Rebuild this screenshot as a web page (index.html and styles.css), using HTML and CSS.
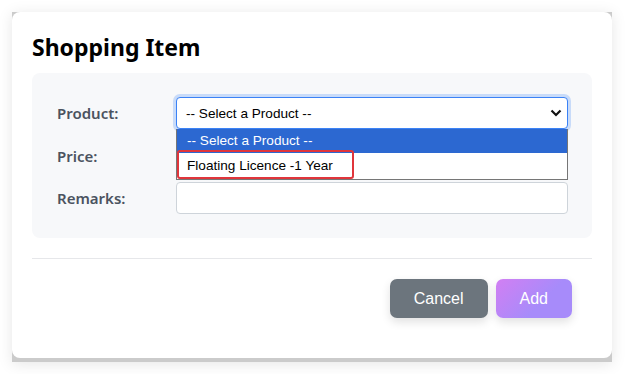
FILE: index.html
```html
<!DOCTYPE html>
<html lang="en">
<head>
  <meta charset="UTF-8" />
  <meta name="viewport" content="width=device-width, initial-scale=1.0" />
  <title>Shopping Item</title>
  <link rel="stylesheet" href="styles.css">
</head>
<body>

  <div class="modal-wrap">
    <div class="modal">
      <h2 class="modal-title">Shopping Item</h2>

      <div class="form-panel">
        <div class="form-row">
          <label>Product:</label>
          <div class="field">
            <div class="select-box">
              <span>-- Select a Product --</span>
              <svg width="12" height="8" viewBox="0 0 12 8"><path d="M1.5 1.5 L6 6 L10.5 1.5" fill="none" stroke="#111" stroke-width="2.2"/></svg>
            </div>
            <!-- open dropdown list -->
            <div class="dropdown">
              <div class="option selected">-- Select a Product --</div>
              <div class="option">Floating Licence -1 Year<span class="highlight"></span></div>
            </div>
          </div>
        </div>
        <div class="form-row">
          <label>Price:</label>
          <div class="field"><div class="text-input"></div></div>
        </div>
        <div class="form-row">
          <label>Remarks:</label>
          <div class="field"><div class="text-input"></div></div>
        </div>
      </div>

      <div class="divider"></div>

      <div class="modal-footer">
        <button class="btn btn-cancel">Cancel</button>
        <button class="btn btn-add">Add</button>
      </div>
    </div>
  </div>

</body>
</html>
```

FILE: styles.css
```css
body {
  margin: 0;
  padding: 12px;
  background-color: #fff;
  font-family: 'Noto Sans', 'Open Sans', sans-serif;
}

.modal-wrap {
  width: 600px;
  background-color: #cbcbcb;
  padding-bottom: 4px;
  box-shadow: 0 2px 14px rgba(0, 0, 0, 0.1);
}

.modal {
  background-color: #fff;
  border-radius: 8px;
  padding: 20px 20px 40px 20px;
}

.modal-title {
  margin: 0 0 11px 0;
  font-size: 23px;
  line-height: 30px;
  font-weight: 700;
  color: #000;
}

.form-panel {
  background-color: #f7f8fa;
  border-radius: 8px;
  padding: 24px 24px 24px 25px;
  display: flex;
  flex-direction: column;
  gap: 10.5px;
}

.form-row {
  display: flex;
  align-items: center;
}

.form-row label {
  width: 119px;
  font-size: 15px;
  font-weight: 600;
  color: #4b5360;
}

.field {
  flex: 1;
  position: relative;
}

.select-box {
  height: 32px;
  box-sizing: border-box;
  border: 1px solid #3b82f6;
  border-radius: 4px;
  box-shadow: 0 0 0 3px rgba(59, 130, 246, 0.25);
  background-color: #fff;
  display: flex;
  align-items: center;
  justify-content: space-between;
  padding: 0 5px 0 9px;
  font-family: 'Liberation Sans', Arial, sans-serif;
  font-size: 13.6px;
  color: #000;
}

.text-input {
  height: 32px;
  box-sizing: border-box;
  border: 1px solid #ced4da;
  border-radius: 4px;
  background-color: #fff;
}

.dropdown {
  position: absolute;
  top: 32px;
  left: 0;
  right: 0;
  background-color: #fff;
  border: 1px solid #767676;
  border-top: none;
  z-index: 5;
  font-family: 'Liberation Sans', Arial, sans-serif;
  font-size: 13.6px;
}

.option {
  position: relative;
  height: 26px;
  line-height: 25px;
  padding-left: 10px;
  color: #000;
}

.option.selected {
  height: 24px;
  line-height: 23px;
  background-color: #2c68d1;
  color: #fff;
}

.highlight {
  position: absolute;
  left: 0;
  top: -3px;
  width: 177px;
  height: 29px;
  box-sizing: border-box;
  border: 2px solid #e0353b;
  border-radius: 3px;
}

.divider {
  height: 1px;
  background-color: #e6e7ea;
  margin-top: 20px;
}

.modal-footer {
  display: flex;
  justify-content: flex-end;
  gap: 8px;
  padding: 20px 20px 0 0;
}

.btn {
  height: 39px;
  padding: 0 24px;
  border: none;
  border-radius: 7px;
  color: #fff;
  font-family: 'Liberation Sans', Arial, sans-serif;
  font-size: 16px;
  cursor: pointer;
  box-shadow: 0 4px 10px rgba(0, 0, 0, 0.12);
}

.btn-cancel {
  background-color: #6c757d;
}

.btn-add {
  background: linear-gradient(135deg, #d27ff3, #a78bfa 60%);
}
```
